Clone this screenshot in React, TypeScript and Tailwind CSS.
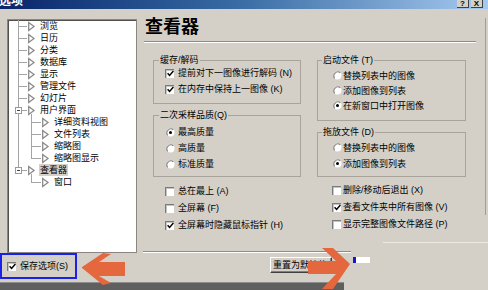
import React from 'react';

type Row = { label: string; on?: boolean };
type Node = { label: string; lv: 1 | 2; open?: boolean; sel?: boolean; last?: boolean; underV1?: boolean };

const tree: Node[] = [
  { label: '浏览', lv: 1 },
  { label: '日历', lv: 1 },
  { label: '分类', lv: 1 },
  { label: '数据库', lv: 1 },
  { label: '显示', lv: 1 },
  { label: '管理文件', lv: 1 },
  { label: '幻灯片', lv: 1 },
  { label: '用户界面', lv: 1, open: true },
  { label: '详细资料视图', lv: 2, underV1: true },
  { label: '文件列表', lv: 2, underV1: true },
  { label: '缩略图', lv: 2, underV1: true },
  { label: '缩略图显示', lv: 2, underV1: true, last: true },
  { label: '查看器', lv: 1, open: true, sel: true, last: true },
  { label: '窗口', lv: 2, last: true },
];

const LINE = '#a4a4a4';

// tree connector drawing for one row (12px tall)
const Gutter = ({ n }: { n: Node }) => {
  const w = n.lv === 1 ? 32 : 46;
  const ax = n.lv === 1 ? 20 : 34;
  return (
    <svg width={w} height="12" viewBox={`0 0 ${w} 12`} className="shrink-0">
      {n.lv === 1 && <line x1="10.5" y1="0" x2="10.5" y2={n.last ? 6 : 12} stroke={LINE} />}
      {n.lv === 2 && n.underV1 && <line x1="10.5" y1="0" x2="10.5" y2="12" stroke={LINE} />}
      {n.lv === 1 && <line x1="10" y1="6.5" x2="19" y2="6.5" stroke={LINE} />}
      {n.lv === 1 && n.open && (
        <>
          <line x1="23.5" y1="10" x2="23.5" y2="12" stroke={LINE} />
          <rect x="7.5" y="3.5" width="6" height="6" fill="#fff" stroke="#9a9a9a" />
          <line x1="9" y1="6.5" x2="12" y2="6.5" stroke="#404040" />
        </>
      )}
      {n.lv === 2 && (
        <>
          <line x1="23.5" y1="0" x2="23.5" y2={n.last ? 6.5 : 12} stroke={LINE} />
          <line x1="23" y1="6.5" x2="33" y2="6.5" stroke={LINE} />
        </>
      )}
      <polygon points={`${ax + 0.7},2.6 ${ax + 6},6.5 ${ax + 0.7},10.4`} fill="#fff" stroke="#8a8a8a" strokeWidth="1.3" />
    </svg>
  );
};

const Check = ({ on }: { on?: boolean }) => (
  <span className="w-[9px] h-[9px] shrink-0 bg-white border-t border-l border-[#7a7a7a] shadow-[inset_1px_1px_0_#c4c4c4] flex items-center justify-center">
    {on && (
      <svg width="7" height="7" viewBox="0 0 7 7">
        <path d="M0.6 3.2 L2.6 5.4 L6.4 1.1" fill="none" stroke="#000" strokeWidth="1.5" />
      </svg>
    )}
  </span>
);

const Radio = ({ on }: { on?: boolean }) => (
  <svg width="9" height="9" viewBox="0 0 9 9" className="shrink-0">
    <circle cx="4.5" cy="4.5" r="4" fill="#fff" />
    <path d="M1.7 7.3 A4 4 0 0 1 7.3 1.7" fill="none" stroke="#808080" strokeWidth="1.1" />
    {on && <circle cx="4.5" cy="4.5" r="1.5" fill="#000" />}
  </svg>
);

export default function App() {
  return (
    <div className="relative w-[488px] h-[290px] overflow-hidden bg-[#d4d0c8] text-black text-[9px] leading-[12px] font-['Liberation_Sans','Noto_Sans_CJK_SC',sans-serif] flex flex-col">
      {/* title bar */}
      <div className="h-[9px] shrink-0 overflow-hidden bg-linear-to-r from-[#0a246a] via-[#3a6ea5] to-[#a6caf0] flex justify-between">
        <span className="-mt-[5px] -ml-px text-white font-bold text-[12px] leading-[12px]">选项</span>
        <div className="flex gap-[2px] mr-[5px]">
          <span className="w-[12px] h-[8px] bg-[#d4d0c8] border-r border-b border-[#404040] flex items-center justify-center text-[8px] leading-[8px] font-bold">?</span>
          <span className="w-[12px] h-[8px] bg-[#d4d0c8] border-r border-b border-[#404040] flex items-center justify-center text-[8px] leading-[8px] font-bold">X</span>
        </div>
      </div>

      {/* body */}
      <div className="flex h-[244px] shrink-0">
        {/* tree */}
        <div className="mt-[10px] ml-[7px] w-[130px] h-[234px] bg-white border border-[#8a867f] shadow-[inset_1px_1px_0_#505050] flex flex-col">
          {tree.map((n) => (
            <div key={n.label} className="flex h-[12px] items-center">
              <Gutter n={n} />
              <span className={n.sel ? '-ml-px px-px bg-[#d4d0c8]' : ''}>{n.label}</span>
            </div>
          ))}
        </div>

        {/* settings pane */}
        <div className="ml-[7px] w-[332px] flex flex-col">
          <h1 className="mt-[9px] ml-px text-[18px] leading-[18px] font-bold">查看器</h1>
          <div className="mt-[5px] h-[2px] border-t border-[#8e8a84] border-b border-b-white" />

          <div className="mt-[11px] pl-[9px] flex gap-[16px]">
            {/* left column */}
            <div className="w-[148px] flex flex-col">
              <fieldset className="border border-[#a8a49c]">
                <legend className="ml-[5px] px-px">缓存/解码</legend>
                <div className="flex flex-col gap-[2px] pb-[7px]">
                  <div className="h-[14px] flex items-center pl-[11px] gap-[4px]"><Check on /><span>提前对下一图像进行解码 (N)</span></div>
                  <div className="h-[14px] flex items-center pl-[11px] gap-[4px]"><Check on /><span>在内存中保持上一图像 (K)</span></div>
                </div>
              </fieldset>
              <fieldset className="mt-[5px] border border-[#a8a49c]">
                <legend className="ml-[5px] px-px">二次采样品质(Q)</legend>
                <div className="flex flex-col gap-[2px] pt-[4px] pb-[5px]">
                  <div className="h-[14px] flex items-center pl-[12px] gap-[3px]"><Radio on /><span>最高质量</span></div>
                  <div className="h-[14px] flex items-center pl-[12px] gap-[3px]"><Radio /><span>高质量</span></div>
                  <div className="h-[14px] flex items-center pl-[12px] gap-[3px]"><Radio /><span>标准质量</span></div>
                </div>
              </fieldset>
              <div className="mt-[6px] flex flex-col gap-px">
                <div className="h-[16px] flex items-center pl-[12px] gap-[4px]"><Check /><span>总在最上 (A)</span></div>
                <div className="h-[16px] flex items-center pl-[12px] gap-[4px]"><Check /><span>全屏幕 (F)</span></div>
                <div className="h-[16px] flex items-center pl-[12px] gap-[4px]"><Check on /><span>全屏幕时隐藏鼠标指针 (H)</span></div>
              </div>
            </div>

            {/* right column */}
            <div className="w-[149px] flex flex-col">
              <fieldset className="border border-[#a8a49c]">
                <legend className="ml-[4px] px-px">启动文件 (T)</legend>
                <div className="flex flex-col pt-[2px] pb-[7px]">
                  <div className="h-[15px] flex items-center pl-[15px] gap-px"><Radio /><span>替换列表中的图像</span></div>
                  <div className="h-[15px] flex items-center pl-[15px] gap-px"><Radio /><span>添加图像到列表</span></div>
                  <div className="h-[15px] flex items-center pl-[15px] gap-px"><Radio on /><span>在新窗口中打开图像</span></div>
                </div>
              </fieldset>
              <fieldset className="mt-[5px] border border-[#a8a49c]">
                <legend className="ml-[4px] px-px">拖放文件 (D)</legend>
                <div className="flex flex-col gap-px pt-[2px] pb-[5px]">
                  <div className="h-[15px] flex items-center pl-[15px] gap-px"><Radio /><span>替换列表中的图像</span></div>
                  <div className="h-[15px] flex items-center pl-[15px] gap-px"><Radio on /><span>添加图像到列表</span></div>
                </div>
              </fieldset>
              <div className="mt-[5px] flex flex-col gap-px">
                <div className="h-[16px] flex items-center pl-[15px] gap-[2px]"><Check /><span>删除/移动后退出 (X)</span></div>
                <div className="h-[16px] flex items-center pl-[15px] gap-[2px]"><Check on /><span>查看文件夹中所有图像 (V)</span></div>
                <div className="h-[16px] flex items-center pl-[15px] gap-[2px]"><Check /><span>显示完整图像文件路径 (P)</span></div>
              </div>
            </div>
          </div>

          <div className="mt-auto flex flex-col">
            <div className="ml-[239px] w-[105px] h-px bg-[#eeebe6]" />
            <div className="mt-[8px] -ml-px w-[208px] h-[2px] border-t border-[#8e8a84] border-b border-b-white" />
          </div>
        </div>

        <div className="ml-[9px] mt-[9px] w-px h-[197px] bg-[#a19d95]" />
      </div>

      {/* bottom strip */}
      <div className="flex h-[29px] shrink-0">
        <div className="w-[77px] h-[26px] border-2 border-[#1a22e8] flex items-center pl-[5px] gap-[4px]">
          <Check on />
          <span>保存选项(S)</span>
        </div>
        <div className="ml-[193px] mt-[4px] w-[62px] h-[16px] bg-[#d4d0c8] border-t border-l border-white border-r border-b border-r-[#404040] border-b-[#404040] shadow-[inset_-1px_-1px_0_#808080] flex items-center pl-[2px] whitespace-nowrap overflow-hidden">
          重置为默认值
        </div>
        <div className="ml-[21px] mt-[4px] w-[17px] h-[6px] bg-white border-l-[3px] border-[#1616d8]" />
      </div>
      <div className="flex h-[8px] shrink-0">
        <div className="w-[344px] bg-[#5f5f5f] border-t border-[#8d8d8d]" />
      </div>

      {/* annotation arrows */}
      <svg className="absolute left-[78px] top-[246px]" width="50" height="42" viewBox="78 246 50 42">
        <polygon points="82,267 103,253 111,254 99,262 125,262 125,276 99,276 111,283 103,285 82,268" fill="#e4673d" />
      </svg>
      <svg className="absolute left-[306px] top-[246px]" width="46" height="44" viewBox="306 246 46 44">
        <polygon points="350,264 333,248 322,248 336,261 308,261 308,274 336,274 322,289 333,289" fill="#e4673d" />
      </svg>
    </div>
  );
}
